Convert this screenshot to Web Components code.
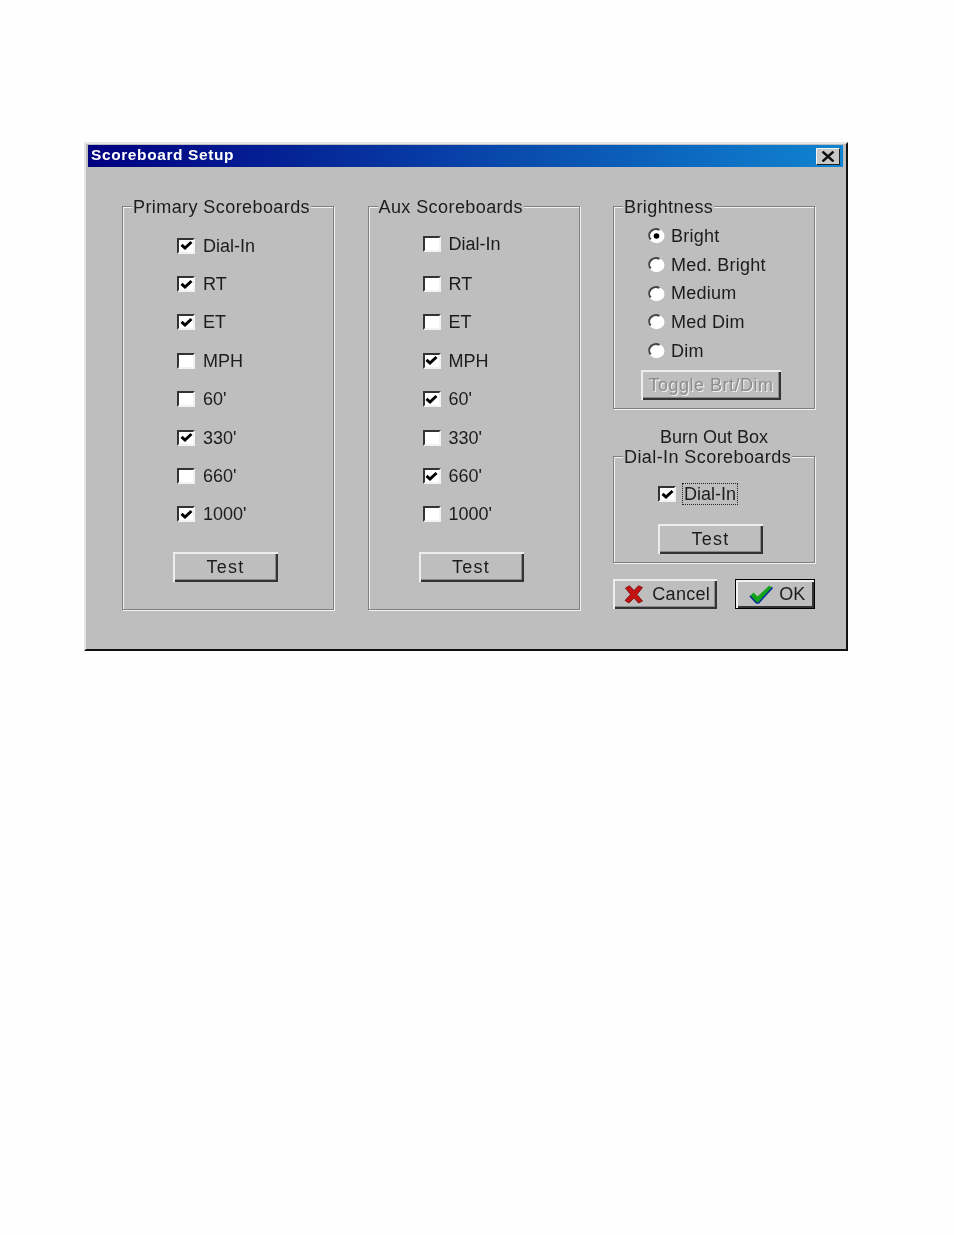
<!DOCTYPE html>
<html>
<head>
<meta charset="utf-8">
<title>Scoreboard Setup</title>
<style>
  body { margin: 0; background: #fefefe; font-family: "Liberation Sans", Arial, sans-serif; }
</style>
</head>
<body>
<win-dialog caption="Scoreboard Setup">
  <win-group label="Primary Scoreboards" style="--h:404px">
    <check-list>
      <win-check checked>Dial-In</win-check>
      <win-check checked>RT</win-check>
      <win-check checked>ET</win-check>
      <win-check>MPH</win-check>
      <win-check>60'</win-check>
      <win-check checked>330'</win-check>
      <win-check>660'</win-check>
      <win-check checked>1000'</win-check>
    </check-list>
    <win-button width="105" style="margin:18px 0 0 50px;letter-spacing:1.3px">Test</win-button>
  </win-group>
  <win-group label="Aux Scoreboards" style="--h:404px">
    <check-list>
      <win-check style="margin:-2px 0 2px">Dial-In</win-check>
      <win-check>RT</win-check>
      <win-check>ET</win-check>
      <win-check checked>MPH</win-check>
      <win-check checked>60'</win-check>
      <win-check>330'</win-check>
      <win-check checked>660'</win-check>
      <win-check>1000'</win-check>
    </check-list>
    <win-button width="105" style="margin:18px 0 0 50px;letter-spacing:1.3px">Test</win-button>
  </win-group>
  <side-column>
    <win-group label="Brightness" style="--h:203px">
      <radio-list>
        <win-radio checked>Bright</win-radio>
        <win-radio>Med. Bright</win-radio>
        <win-radio>Medium</win-radio>
        <win-radio>Med Dim</win-radio>
        <win-radio>Dim</win-radio>
      </radio-list>
      <win-button width="140" disabled style="margin:5px 0 0 27px;letter-spacing:.5px">Toggle Brt/Dim</win-button>
    </win-group>
    <burn-title>Burn Out Box</burn-title>
    <win-group label="Dial-In Scoreboards" style="--h:107px">
      <win-check checked focused style="margin:24px 0 0 44px;height:26px">Dial-In</win-check>
      <win-button width="105" style="margin:17px 0 0 44px;letter-spacing:1.3px">Test</win-button>
    </win-group>
    <button-row>
      <win-button width="105" icon="cancel" style="letter-spacing:.3px;padding-left:4px;gap:8px">Cancel</win-button>
      <win-button width="80" icon="ok" default style="padding-left:4px;gap:6px">OK</win-button>
    </button-row>
  </side-column>
</win-dialog>

<script>
class WinDialog extends HTMLElement {
  constructor() {
    super()
    this.attachShadow({ mode: 'open' })
  }
  connectedCallback() {
    this.shadowRoot.innerHTML = `
      <style>
        :host {
          display: block;
          box-sizing: border-box;
          width: 764px;
          height: 509px;
          margin: 142px 0 0 84px;
          background: #bebebe;
          border-top: 2px solid #e6e6e6;
          border-left: 2px solid #e6e6e6;
          border-right: 2px solid #111;
          border-bottom: 2px solid #111;
          padding: 1px 3px 0 2px;
          color: #1c1c1c;
          font: 18px "Liberation Sans", Arial, sans-serif;
          filter: blur(.45px);
        }
        .title {
          height: 22px;
          box-sizing: border-box;
          display: flex;
          align-items: center;
          justify-content: space-between;
          padding: 0 3px 0;
          background: linear-gradient(90deg, #000080, #1084d0);
          color: #fff;
          font-weight: bold;
          font-size: 15.5px;
          letter-spacing: .6px;
        }
        .title span:first-child { margin-top: -2px; }
        .close {
          width: 24px;
          height: 17px;
          box-sizing: border-box;
          background: #c8c8c8;
          border: 1px solid;
          border-color: #f4f4f4 #222 #222 #f4f4f4;
          display: flex;
          align-items: center;
          justify-content: center;
        }
        .body {
          display: grid;
          grid-template-columns: 212px 212px 202px;
          column-gap: 33.5px;
          padding: 39px 0 0 34px;
        }
      </style>
      <div class="title">
        <span>${this.getAttribute('caption')}</span>
        <span class="close"><svg width="14" height="11" viewBox="0 0 14 11"><path d="M1.5 .5L12.5 10.5M12.5 .5L1.5 10.5" stroke="#111" stroke-width="2.4"/></svg></span>
      </div>
      <div class="body"><slot></slot></div>
    `
  }
}

class WinGroup extends HTMLElement {
  constructor() {
    super()
    this.attachShadow({ mode: 'open' })
  }
  connectedCallback() {
    this.shadowRoot.innerHTML = `
      <style>
        :host {
          display: block;
          position: relative;
          box-sizing: border-box;
          height: var(--h);
          border: 1px solid #808080;
          box-shadow: inset 1px 1px 0 #f2f2f2, 1px 1px 0 #f2f2f2;
        }
        .legend {
          position: absolute;
          top: -10px;
          left: 9px;
          padding: 0 1px;
          line-height: 20px;
          letter-spacing: .42px;
          background: #bebebe;
          white-space: nowrap;
        }
      </style>
      <span class="legend">${this.getAttribute('label')}</span>
      <slot></slot>
    `
  }
}

class CheckList extends HTMLElement {
  constructor() {
    super()
    this.attachShadow({ mode: 'open' }).innerHTML = `
      <style>
        :host { display: grid; grid-auto-rows: 38.4px; padding: 19.5px 0 0 54px; }
      </style>
      <slot></slot>
    `
  }
}

class RadioList extends HTMLElement {
  constructor() {
    super()
    this.attachShadow({ mode: 'open' }).innerHTML = `
      <style>
        :host { display: grid; grid-auto-rows: 28.7px; padding: 15px 0 0 34px; letter-spacing: .25px; }
      </style>
      <slot></slot>
    `
  }
}

class SideColumn extends HTMLElement {
  constructor() {
    super()
    this.attachShadow({ mode: 'open' }).innerHTML = `
      <style>
        :host { display: flex; flex-direction: column; }
      </style>
      <slot></slot>
    `
  }
}

class BurnTitle extends HTMLElement {
  constructor() {
    super()
    this.attachShadow({ mode: 'open' }).innerHTML = `
      <style>
        :host { display: block; text-align: center; line-height: 20px; margin: 18px 0 9px; }
      </style>
      <slot></slot>
    `
  }
}

class ButtonRow extends HTMLElement {
  constructor() {
    super()
    this.attachShadow({ mode: 'open' }).innerHTML = `
      <style>
        :host { display: flex; gap: 18px; margin-top: 16px; }
      </style>
      <slot></slot>
    `
  }
}

class WinCheck extends HTMLElement {
  constructor() {
    super()
    this.attachShadow({ mode: 'open' })
  }
  connectedCallback() {
    const tick = this.hasAttribute('checked')
      ? '<svg width="13" height="11" viewBox="0 0 13 11"><path d="M1.5 4.8L5 8L11.5 2" fill="none" stroke="#000" stroke-width="3"/></svg>'
      : ''
    this.shadowRoot.innerHTML = `
      <style>
        :host { display: flex; align-items: center; gap: 7px; white-space: nowrap; }
        .box {
          width: 18px;
          height: 16px;
          box-sizing: border-box;
          flex: none;
          background: #fff;
          border: 2px solid;
          border-color: #333 #f2f2f2 #f2f2f2 #333;
          display: flex;
          align-items: center;
          justify-content: center;
        }
        .text { padding: 0 1px; line-height: 20px; ${this.hasAttribute('focused') ? 'outline: 1px dotted #222; outline-offset: 0;' : ''} }
      </style>
      <span class="box">${tick}</span>
      <span class="text"><slot></slot></span>
    `
  }
}

class WinRadio extends HTMLElement {
  constructor() {
    super()
    this.attachShadow({ mode: 'open' })
  }
  connectedCallback() {
    const dot = this.hasAttribute('checked') ? '<circle cx="8.5" cy="8" r="2.8" fill="#000"/>' : ''
    this.shadowRoot.innerHTML = `
      <style>
        :host { display: flex; align-items: center; gap: 6px; white-space: nowrap; }
        svg { flex: none; }
      </style>
      <svg width="17" height="16" viewBox="0 0 17 16">
        <ellipse cx="8.5" cy="8" rx="8" ry="7.2" fill="#fff"/>
        <path d="M11.5 2A6.8 6.4 0 0 0 2.7 11.5" fill="none" stroke="#444" stroke-width="2"/>
        ${dot}
      </svg>
      <span><slot></slot></span>
    `
  }
}

const BUTTON_ICONS = {
  cancel: '<svg width="20" height="19" viewBox="0 0 20 19"><path d="M1.5 3L5.5 .8L10 5.5L14.5 .8L18.5 2.5L13 9.5L18.5 16L14.5 18L10 13L5 18L1 15.5L6.5 9.5Z" fill="#c21212" stroke="#7a0808" stroke-width=".8"/></svg>',
  ok: '<svg width="24" height="19" viewBox="0 0 24 19"><path d="M1 11L4.5 7.5L8.5 11.5L20 .8L23.5 2.5L9.5 18H7Z" fill="#12a51c"/><path d="M1 11L7.5 18H9.5L23.5 2.5" fill="none" stroke="#0b2f9a" stroke-width="1.6"/></svg>'
}

class WinButton extends HTMLElement {
  constructor() {
    super()
    this.attachShadow({ mode: 'open' })
  }
  connectedCallback() {
    const icon = BUTTON_ICONS[this.getAttribute('icon')] || ''
    const isDefault = this.hasAttribute('default')
    this.shadowRoot.innerHTML = `
      <style>
        :host {
          display: flex;
          align-items: center;
          justify-content: center;
          gap: 9px;
          box-sizing: border-box;
          width: ${this.getAttribute('width')}px;
          height: 30px;
          background: #bebebe;
          border: ${isDefault ? '1px solid #000' : '0'};
          ${isDefault ? 'box-shadow: inset 2px 2px 0 #f2f2f2, inset -2px -2px 0 #333;' : 'box-shadow: inset 2px 2px 0 #ededed, inset -2px -2px 0 #333, inset -3px -3px 0 #8a8a8a;'}
        }
        :host([disabled]) { color: #8b8b8b; text-shadow: 1px 1px 0 #f2f2f2; }
        svg { flex: none; }
        span { padding-top: 1px; }
      </style>
      ${icon}
      <span><slot></slot></span>
    `
  }
}

customElements.define('win-dialog', WinDialog)
customElements.define('win-group', WinGroup)
customElements.define('check-list', CheckList)
customElements.define('radio-list', RadioList)
customElements.define('side-column', SideColumn)
customElements.define('burn-title', BurnTitle)
customElements.define('button-row', ButtonRow)
customElements.define('win-check', WinCheck)
customElements.define('win-radio', WinRadio)
customElements.define('win-button', WinButton)
</script>
</body>
</html>
